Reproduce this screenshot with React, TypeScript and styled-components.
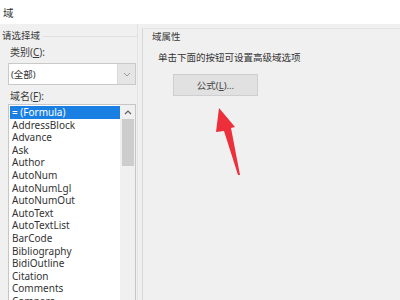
import React from "react";
import styled, { createGlobalStyle } from "styled-components";

const Global = createGlobalStyle`
  html, body {
    margin: 0;
    padding: 0;
    width: 400px;
    height: 300px;
    overflow: hidden;
    background: #f0f0f0;
  }
  body {
    font-family: "Noto Sans", "Noto Sans CJK SC", sans-serif;
    color: #2a2a2a;
  }
`;

const Window = styled.div`
  width: 400px;
  height: 300px;
  display: flex;
  flex-direction: column;
  position: relative;
  overflow: hidden;
`;

const TitleBar = styled.div`
  height: 24px;
  flex: none;
  background: #fff;
  display: flex;
  align-items: center;
  padding-left: 3px;
  font-size: 10.5px;
  color: #333;
`;

const Body = styled.div`
  flex: 1;
  display: flex;
  min-height: 0;
`;

const LeftPane = styled.div`
  width: 137px;
  flex: none;
  border-right: 1px solid #e2e2e2;
  padding: 5px 0 0 0;
  display: flex;
  flex-direction: column;
`;

const GroupHead = styled.div`
  display: flex;
  align-items: center;
  gap: 3px;
  height: 12px;
  padding-left: 2px;
  font-size: 9.5px;
  color: #3a3a3a;
  &::after {
    content: "";
    flex: 1;
    height: 1px;
    background: #e0e0e0;
    margin-top: 2px;
  }
`;

const Label = styled.div<{ $top: number }>`
  margin: ${(p) => p.$top}px 0 0 10px;
  font-size: 10px;
  line-height: 12px;
  color: #3c3c3c;
  u {
    text-underline-offset: 1px;
  }
`;

const Combo = styled.div`
  margin: 5px 0 0 8px;
  width: 128px;
  height: 22px;
  box-sizing: border-box;
  border: 1px solid #c9c9c9;
  background: #fff;
  display: flex;
  align-items: center;
  font-size: 9.5px;
  color: #333;
  span {
    flex: 1;
    padding-left: 2px;
  }
`;

const DropButton = styled.div`
  width: 17px;
  height: 20px;
  background: #e5e5e5;
  border-left: 1px solid #dadada;
  display: flex;
  align-items: center;
  justify-content: center;
`;

const ListBox = styled.div`
  margin: 2px 0 0 8px;
  width: 128px;
  flex: 1;
  box-sizing: border-box;
  border: 1px solid #c6c6c6;
  border-bottom: none;
  background: #fff;
  display: flex;
  overflow: hidden;
`;

const Items = styled.div`
  flex: 1;
  padding: 1px 0 0 1px;
`;

const Item = styled.div<{ $selected?: boolean }>`
  height: 12.6px;
  line-height: 12.6px;
  padding-left: 2px;
  font-size: 10px;
  white-space: nowrap;
  color: ${(p) => (p.$selected ? "#fff" : "#333")};
  background: ${(p) => (p.$selected ? "#1a7fe3" : "transparent")};
`;

const ScrollBar = styled.div`
  width: 15px;
  flex: none;
  background: #f0f0f0;
  display: flex;
  flex-direction: column;
  align-items: center;
`;

const ScrollArrow = styled.div`
  height: 14px;
  width: 100%;
  display: flex;
  align-items: center;
  justify-content: center;
`;

const Thumb = styled.div`
  width: 12px;
  height: 47px;
  background: #cdcdcd;
`;

const Gap = styled.div`
  width: 4px;
  flex: none;
`;

const RightPane = styled.div`
  flex: 1;
  margin-top: 4px;
  border-left: 1px solid #d6d6d6;
  border-top: 1px solid #e4e4e4;
  padding: 2px 0 0 9px;
  display: flex;
  flex-direction: column;
`;

const Caption = styled.div`
  font-size: 9.5px;
  line-height: 12px;
  color: #3a3a3a;
`;

const Hint = styled.div`
  margin: 9px 0 0 6px;
  font-size: 9.5px;
  line-height: 12px;
  color: #333;
`;

const PushButton = styled.div`
  margin: 10px 0 0 21px;
  width: 85px;
  height: 22px;
  box-sizing: border-box;
  border: 1px solid #cfcfcf;
  background: #e1e1e1;
  display: flex;
  align-items: center;
  justify-content: center;
  font-size: 9.5px;
  color: #444;
`;

const Pointer = styled.svg`
  position: absolute;
  left: 212px;
  top: 104px;
`;

const fields = [
  "= (Formula)",
  "AddressBlock",
  "Advance",
  "Ask",
  "Author",
  "AutoNum",
  "AutoNumLgl",
  "AutoNumOut",
  "AutoText",
  "AutoTextList",
  "BarCode",
  "Bibliography",
  "BidiOutline",
  "Citation",
  "Comments",
  "Compare",
];

export default function App() {
  return (
    <>
      <Global />
      <Window>
        <TitleBar>域</TitleBar>
        <Body>
          <LeftPane>
            <GroupHead>请选择域</GroupHead>
            <Label $top={5}>
              类别(<u>C</u>):
            </Label>
            <Combo>
              <span>(全部)</span>
              <DropButton>
                <svg width="8" height="5" viewBox="0 0 8 5">
                  <path d="M1 1l3 3 3-3" fill="none" stroke="#9a9a9a" strokeWidth="1" />
                </svg>
              </DropButton>
            </Combo>
            <Label $top={5}>
              域名(<u>F</u>):
            </Label>
            <ListBox>
              <Items>
                {fields.map((name, i) => (
                  <Item key={name} $selected={i === 0}>
                    {name}
                  </Item>
                ))}
              </Items>
              <ScrollBar>
                <ScrollArrow>
                  <svg width="8" height="5" viewBox="0 0 8 5">
                    <path d="M1 4l3-3 3 3" fill="none" stroke="#606060" strokeWidth="1.2" />
                  </svg>
                </ScrollArrow>
                <Thumb />
              </ScrollBar>
            </ListBox>
          </LeftPane>
          <Gap />
          <RightPane>
            <Caption>域属性</Caption>
            <Hint>单击下面的按钮可设置高级域选项</Hint>
            <PushButton>
              <span>
                公式(<u>L</u>)...
              </span>
            </PushButton>
          </RightPane>
        </Body>
        <Pointer width="32" height="74" viewBox="0 0 32 74">
          <polygon
            points="7,4 23,23 19,24 28,71 26,71 12,27 4,28"
            fill="#ec2f3b"
          />
        </Pointer>
      </Window>
    </>
  );
}
